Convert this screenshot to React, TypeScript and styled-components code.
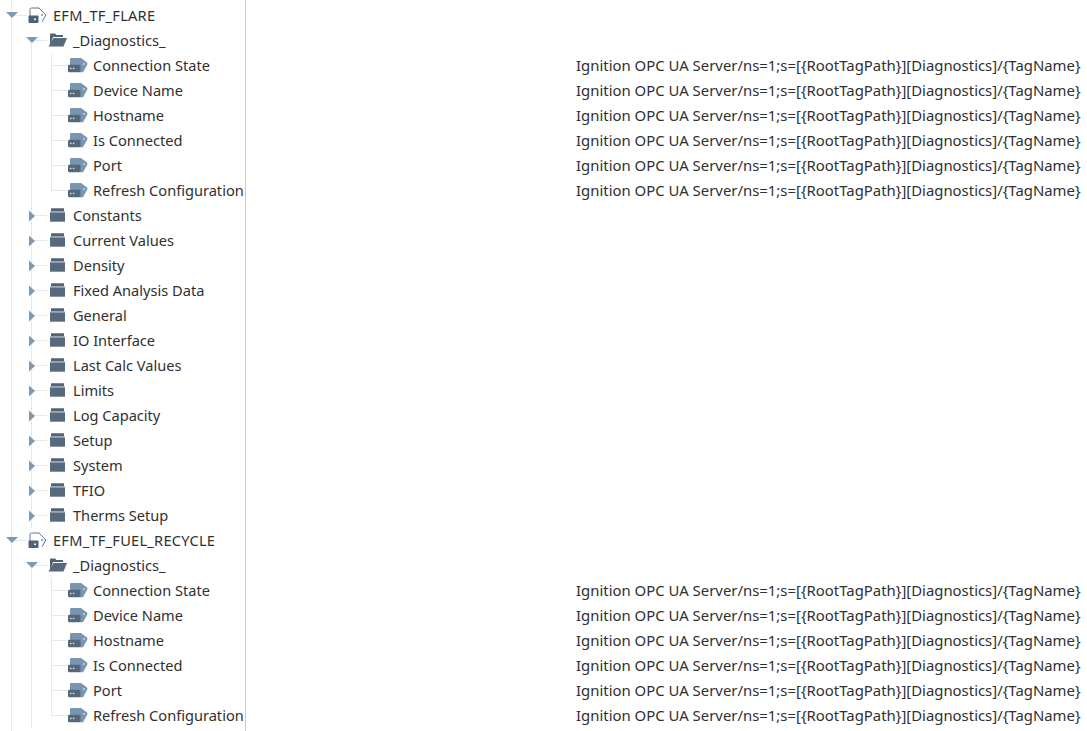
import React from 'react'
import styled, { createGlobalStyle } from 'styled-components'

const LINE = '#e6e8ea'
const PATH_TEXT = 'Ignition OPC UA Server/ns=1;s=[{RootTagPath}][Diagnostics]/{TagName}'

const GlobalStyle = createGlobalStyle`
  html, body {
    margin: 0;
    padding: 0;
    background: #ffffff;
    overflow: hidden;
  }
`

// Style
const Page = styled.div`
  width: 1087px;
  height: 731px;
  padding-top: 3px;
  box-sizing: border-box;
  overflow: hidden;
  font-family: 'Noto Sans', sans-serif;
  font-size: 14.6px;
  color: #303030;
  background:
    linear-gradient(#c9cbce, #c9cbce) 245px 0 / 1px 100% no-repeat,
    linear-gradient(${LINE}, ${LINE}) 11px 0 / 1px 100% no-repeat;
`

const Row = styled.div`
  display: flex;
  height: 25px;
  line-height: 25px;
`

const TreeCell = styled.div`
  display: flex;
  width: 245px;
  padding-left: 1px;
  box-sizing: border-box;
  overflow: hidden;
  white-space: nowrap;
  flex-shrink: 0;
`

const PathCell = styled.div`
  padding-left: 331px;
  font-size: 14.9px;
  white-space: nowrap;
`

const Guide = styled.div<{ $line?: boolean }>`
  width: 20px;
  height: 25px;
  flex-shrink: 0;
  background: ${(p) =>
    p.$line ? `linear-gradient(${LINE}, ${LINE}) 10px 0 / 1px 100% no-repeat` : 'none'};
`

const Branch = styled.div<{ $up?: boolean; $down?: boolean }>`
  display: flex;
  align-items: center;
  width: 27px;
  height: 25px;
  flex-shrink: 0;
  background:
    linear-gradient(${LINE}, ${LINE}) 10px 12px / 16px 1px no-repeat,
    ${(p) =>
      p.$up ? `linear-gradient(${LINE}, ${LINE}) 10px 0 / 1px 13px no-repeat,` : ''}
    ${(p) =>
      p.$down ? `linear-gradient(${LINE}, ${LINE}) 10px 12px / 1px 13px no-repeat,` : ''}
    transparent;
`

const Arrow = styled.svg`
  display: block;
  width: 12px;
  height: 12px;
  margin-left: 5px;
  fill: #7d9ab5;
`

const IconCell = styled.div<{ $inset?: number }>`
  display: flex;
  align-items: center;
  width: 25px;
  height: 25px;
  padding-left: ${(p) => p.$inset ?? 0}px;
  box-sizing: border-box;
  flex-shrink: 0;
`

const Label = styled.span`
  flex-shrink: 0;
`

const DeviceLabel = styled(Label)`
  letter-spacing: 0.25px;
`

// Icons
const Toggle = ({ open }: { open: boolean }) => (
  <Arrow viewBox="0 0 12 12">
    {open ? <path d="M0 2h12L6 8z" /> : <path d="M3 0.500l6 5.500-6 5.500z" />}
  </Arrow>
)

const DeviceIcon = () => (
  <svg width="19" height="17" viewBox="0 0 19 17">
    <path
      d="M2 9V2.500Q2 1 3.500 1H11l6.800 7-3.800 6.800"
      fill="none"
      stroke="#5b7590"
      strokeWidth="1"
      strokeLinejoin="round"
    />
    <circle cx="14" cy="8" r="1" fill="#7d96af" />
    <rect x="0.500" y="8.500" width="10" height="7.500" rx="1" fill="#4c6278" />
    <circle cx="7" cy="12.300" r="1" fill="#ffffff" />
  </svg>
)

const FolderOpenIcon = () => (
  <svg width="19" height="16" viewBox="0 0 19 16">
    <path d="M2 13V1.500q0-1 1-1h4L8.500 2H15v2H5L2 13z" fill="#4f6276" />
    <path d="M5.500 5H19l-3.500 8.500H.5z" fill="#56697d" />
  </svg>
)

const FolderIcon = () => (
  <svg width="15" height="15" viewBox="0 0 15 15">
    <path d="M1 .800q0-.5.500-.5h12q.5 0 .5.500V3.500H1z" fill="#4f6276" />
    <rect x="0" y="3.500" width="15" height="1" fill="#8ea0b2" />
    <rect x="0" y="4.500" width="15" height="9.200" fill="#56697d" />
  </svg>
)

const TagIcon = () => (
  <svg width="20" height="16" viewBox="0 0 20 16">
    <path
      d="M2 1.200Q2 0 3.200 0H13l6 4.500q.7 1 .3 2L15 14.300H12V7H2z"
      fill="#7a95b2"
    />
    <circle cx="16" cy="6" r=".8" fill="#ffffff" />
    <rect x="0" y="6.700" width="12.500" height="7.600" rx="1.200" fill="#55687a" />
    <rect x="2" y="9.800" width="1.500" height="1.300" fill="#dfe5ea" />
    <rect x="4.800" y="9.800" width="1.500" height="1.300" fill="#dfe5ea" />
  </svg>
)

// Data
const TAGS = ['Connection State', 'Device Name', 'Hostname', 'Is Connected', 'Port', 'Refresh Configuration']
const FOLDERS = [
  'Constants',
  'Current Values',
  'Density',
  'Fixed Analysis Data',
  'General',
  'IO Interface',
  'Last Calc Values',
  'Limits',
  'Log Capacity',
  'Setup',
  'System',
  'TFIO',
  'Therms Setup',
]

// Component
const Device = ({ name, folders }: { name: string; folders: string[] }) => (
  <>
    <Row>
      <TreeCell>
        <Branch>
          <Toggle open />
        </Branch>
        <IconCell>
          <DeviceIcon />
        </IconCell>
        <DeviceLabel>{name}</DeviceLabel>
      </TreeCell>
    </Row>
    <Row>
      <TreeCell>
        <Guide />
        <Branch $down>
          <Toggle open />
        </Branch>
        <IconCell>
          <FolderOpenIcon />
        </IconCell>
        <Label>_Diagnostics_</Label>
      </TreeCell>
    </Row>
    {TAGS.map((tag, i) => (
      <Row key={tag}>
        <TreeCell>
          <Guide />
          <Guide $line />
          <Branch $up $down={i < TAGS.length - 1}></Branch>
          <IconCell>
            <TagIcon />
          </IconCell>
          <Label>{tag}</Label>
        </TreeCell>
        <PathCell>{PATH_TEXT}</PathCell>
      </Row>
    ))}
    {folders.map((folder) => (
      <Row key={folder}>
        <TreeCell>
          <Guide />
          <Branch $up $down>
            <Toggle open={false} />
          </Branch>
          <IconCell $inset={2}>
            <FolderIcon />
          </IconCell>
          <Label>{folder}</Label>
        </TreeCell>
      </Row>
    ))}
  </>
)

const App = () => (
  <Page>
    <GlobalStyle />
    <Device name="EFM_TF_FLARE" folders={FOLDERS} />
    <Device name="EFM_TF_FUEL_RECYCLE" folders={[]} />
  </Page>
)

export default App
